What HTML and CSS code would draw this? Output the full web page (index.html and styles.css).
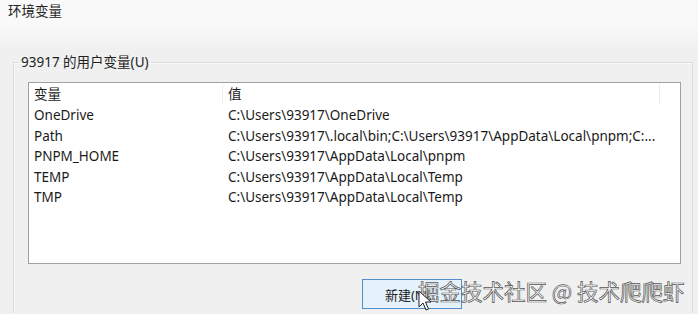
FILE: index.html
```html
<!DOCTYPE html>
<html lang="zh-CN">
<head>
<meta charset="utf-8">
<title>环境变量</title>
<link rel="stylesheet" href="styles.css">
</head>
<body>
<div class="window">
  <div class="titlebar">环境变量</div>
  <fieldset class="group">
    <legend class="group-label">93917 的用户变量(U)</legend>
    <div class="listbox">
      <div class="list-header">
        <div class="col col-name">变量</div>
        <div class="col col-value">值</div>
        <div class="col col-rest"></div>
      </div>
      <div class="row"><div class="col col-name">OneDrive</div><div class="col col-value">C:\Users\93917\OneDrive</div></div>
      <div class="row"><div class="col col-name">Path</div><div class="col col-value">C:\Users\93917\.local\bin;C:\Users\93917\AppData\Local\pnpm;C:...</div></div>
      <div class="row"><div class="col col-name">PNPM_HOME</div><div class="col col-value">C:\Users\93917\AppData\Local\pnpm</div></div>
      <div class="row"><div class="col col-name">TEMP</div><div class="col col-value">C:\Users\93917\AppData\Local\Temp</div></div>
      <div class="row"><div class="col col-name">TMP</div><div class="col col-value">C:\Users\93917\AppData\Local\Temp</div></div>
    </div>
    <div class="buttons">
      <button class="btn btn-focus">新建(N)...</button>
    </div>
  </fieldset>
  <div class="watermark">掘金技术社区 @ 技术爬爬虾</div>
  <svg class="cursor" width="14" height="22" viewBox="0 0 14 22">
    <path d="M1 1 L1 17 L5 13 L8 20 L10.5 19 L7.5 12 L13 12 Z" fill="#fff" stroke="#222" stroke-width="1"/>
  </svg>
</div>
</body>
</html>
```

FILE: styles.css
```css
html, body {
  margin: 0;
  padding: 0;
}
body {
  width: 698px;
  height: 314px;
  overflow: hidden;
  background: #f0f0f0;
  font-family: "Noto Sans", "Noto Sans CJK SC", sans-serif;
  font-size: 13.5px;
  color: #1a1a1a;
}
.window {
  position: relative;
  width: 698px;
  height: 314px;
  background: linear-gradient(#f9f9f9 0px, #f9f9f9 26px, #f0f0f0 48px);
}
.titlebar {
  height: 28px;
  line-height: 22px;
  padding-left: 8px;
  font-size: 13.5px;
  color: #222;
}
.group {
  margin: 25px 5px 0 13px;
  padding: 11px 11px 0 14px;
  border: 1px solid #dcdcdc;
  border-bottom: none;
  box-shadow: inset 1px 1px 0 #fafafa;
  height: 260px;
  box-sizing: border-box;
}
.group-label {
  margin-left: -8px;
  padding: 0 2px 0 1px;
  font-size: 13.5px;
  line-height: 18px;
  color: #222;
}
.listbox {
  height: 182px;
  background: #fff;
  border: 1px solid #a0a0a0;
  box-sizing: border-box;
  padding-top: 1px;
}
.list-header {
  display: flex;
  height: 21px;
  line-height: 20px;
}
.list-header .col-name {
  border-right: 1px solid #f0f0f0;
}
.list-header .col-value {
  width: 431px;
  flex: none;
  border-right: 1px solid #ececec;
}
.row {
  display: flex;
  height: 20.5px;
  line-height: 20.5px;
}
.col {
  white-space: nowrap;
  overflow: hidden;
}
.col-name {
  width: 194px;
  flex: none;
  padding-left: 5px;
  box-sizing: border-box;
}
.col-value {
  padding-left: 5px;
}
.buttons {
  display: flex;
  justify-content: flex-end;
  padding-top: 15px;
  padding-right: 219px;
}
.btn {
  width: 100px;
  height: 30px;
  background: #e5f1fb;
  border: 1px solid #4f8fc9;
  border-radius: 0;
  font-family: inherit;
  font-size: 13px;
  color: #222;
  padding: 0;
}
.watermark {
  position: absolute;
  left: 418px;
  top: 276px;
  white-space: nowrap;
  font-size: 21.5px;
  line-height: 30px;
  color: #fff;
  -webkit-text-stroke: 0.7px #555;
  font-family: "Noto Sans CJK SC", sans-serif;
}
.cursor {
  position: absolute;
  left: 418px;
  top: 290px;
}
```
